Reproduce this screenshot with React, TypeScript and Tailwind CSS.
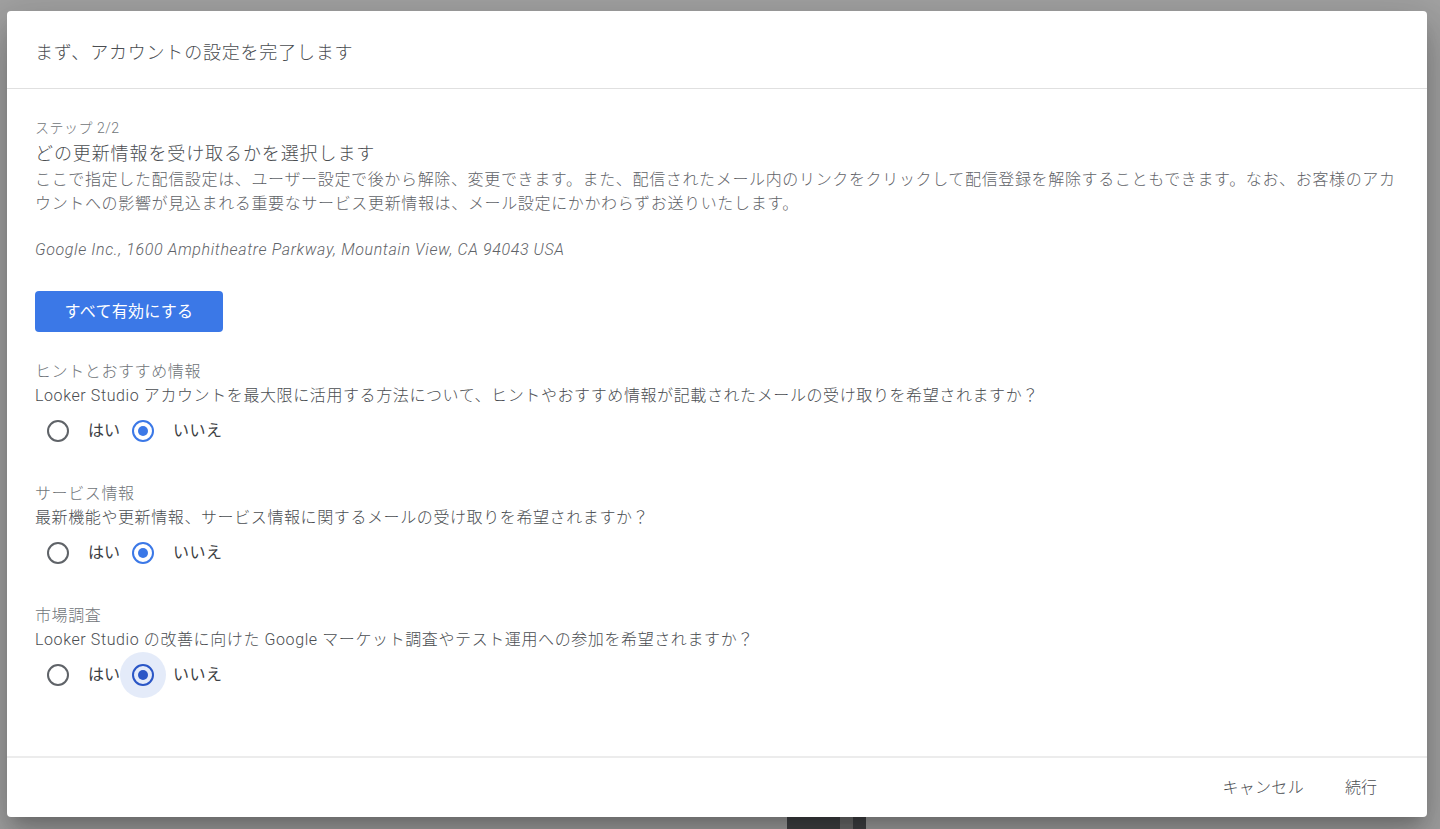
import React, { useState } from 'react';

type Choice = 'yes' | 'no';

const sections = [
  {
    id: 'tips',
    label: 'ヒントとおすすめ情報',
    question:
      'Looker Studio アカウントを最大限に活用する方法について、ヒントやおすすめ情報が記載されたメールの受け取りを希望されますか？',
  },
  {
    id: 'service',
    label: 'サービス情報',
    question: '最新機能や更新情報、サービス情報に関するメールの受け取りを希望されますか？',
  },
  {
    id: 'research',
    label: '市場調査',
    question: 'Looker Studio の改善に向けた Google マーケット調査やテスト運用への参加を希望されますか？',
  },
];

const Radio = ({
  checked,
  focused,
  onClick,
}: {
  checked: boolean;
  focused?: boolean;
  onClick: () => void;
}) => {
  const color = focused ? 'border-[#2a56c6]' : 'border-[#3b78e7]';
  const dot = focused ? 'bg-[#2a56c6]' : 'bg-[#3b78e7]';
  return (
    <button
      type="button"
      onClick={onClick}
      className={`flex h-[46px] w-[46px] shrink-0 items-center justify-center rounded-full ${
        focused ? 'bg-[#e4ebf9]' : ''
      }`}
    >
      <span
        className={`flex h-[22px] w-[22px] items-center justify-center rounded-full border-2 ${
          checked ? color : 'border-[#5f6368]'
        }`}
      >
        {checked && <span className={`h-[10px] w-[10px] rounded-full ${dot}`} />}
      </span>
    </button>
  );
};

export default function App() {
  const [values, setValues] = useState<Record<string, Choice>>({
    tips: 'no',
    service: 'no',
    research: 'no',
  });

  const enableAll = () => setValues({ tips: 'yes', service: 'yes', research: 'yes' });

  return (
    <div className="relative h-[829px] w-[1440px] overflow-hidden bg-[#a2a2a2] font-['Roboto','Noto_Sans_CJK_JP',sans-serif]">
      {/* dimmed page behind the dialog */}
      <div className="absolute bottom-0 left-[787px] flex h-[12px] w-[79px] bg-[#414346]">
        <div className="ml-[53px] h-full w-[13px] bg-[#6e6e6e]" />
      </div>

      <div className="relative ml-[7px] mt-[11px] flex h-[806px] w-[1420px] flex-col rounded-[4px] bg-white shadow-[0_11px_15px_-7px_rgba(0,0,0,0.2),0_24px_38px_3px_rgba(0,0,0,0.14),0_9px_46px_8px_rgba(0,0,0,0.12)]">
        {/* header */}
        <div className="flex h-[78px] shrink-0 items-center border-b border-[#e0e0e0] pl-[28px] pt-[6px]">
          <h1 className="text-[18px] font-light leading-[24px] tracking-[0.8px] text-[#4a4d51]">
            まず、アカウントの設定を完了します
          </h1>
        </div>

        {/* body */}
        <div className="flex-1 pl-[28px] pr-[28px] pt-[27px]">
          <div className="text-[14px] font-light leading-[24px] tracking-[0.5px] text-[#6f7478]">ステップ 2/2</div>
          <h2 className="text-[18px] font-light leading-[28px] tracking-[0.9px] text-[#4a4d51]">
            どの更新情報を受け取るかを選択します
          </h2>
          <p className="text-[16px] font-light leading-[24px] tracking-[0.65px] text-[#5f6368]">
            ここで指定した配信設定は、ユーザー設定で後から解除、変更できます。また、配信されたメール内のリンクをクリックして配信登録を解除することもできます。なお、お客様のアカウントへの影響が見込まれる重要なサービス更新情報は、メール設定にかかわらずお送りいたします。
          </p>
          <p className="mt-[22px] text-[16px] font-light italic leading-[24px] tracking-[0.62px] text-[#5f6368]">
            Google Inc., 1600 Amphitheatre Parkway, Mountain View, CA 94043 USA
          </p>

          <button
            type="button"
            onClick={enableAll}
            className="mt-[29px] h-[41px] w-[188px] rounded-[4px] bg-[#3b78e7] text-[16px] tracking-[0.3px] text-white"
          >
            すべて有効にする
          </button>

          <div className="mt-[28px] flex flex-col gap-[28px]">
            {sections.map((s, i) => {
              const focused = i === sections.length - 1;
              return (
                <div key={s.id}>
                  <div className="text-[16px] font-light leading-[24px] tracking-[0.6px] text-[#6f7478]">{s.label}</div>
                  <div className="text-[16px] font-light leading-[24px] tracking-[0.6px] text-[#4a4d51]">{s.question}</div>
                  <div className="flex h-[46px] items-center">
                    <Radio
                      checked={values[s.id] === 'yes'}
                      onClick={() => setValues({ ...values, [s.id]: 'yes' })}
                    />
                    <span className="ml-[7px] text-[16px] leading-[24px] text-[#3c4043]">はい</span>
                    <Radio
                      checked={values[s.id] === 'no'}
                      focused={focused}
                      onClick={() => setValues({ ...values, [s.id]: 'no' })}
                    />
                    <span className="ml-[7px] text-[16px] leading-[24px] tracking-[0.5px] text-[#3c4043]">
                      いいえ
                    </span>
                  </div>
                </div>
              );
            })}
          </div>
        </div>

        {/* footer */}
        <div className="flex h-[61px] shrink-0 items-center justify-end gap-[9px] border-t-2 border-[#ececec] pr-[34px]">
          <button type="button" className="h-[36px] px-[16px] text-[16px] font-light tracking-[0.3px] text-[#4a4d51]">
            キャンセル
          </button>
          <button type="button" className="h-[36px] px-[16px] text-[16px] font-light text-[#4a4d51]">
            続行
          </button>
        </div>
      </div>
    </div>
  );
}
